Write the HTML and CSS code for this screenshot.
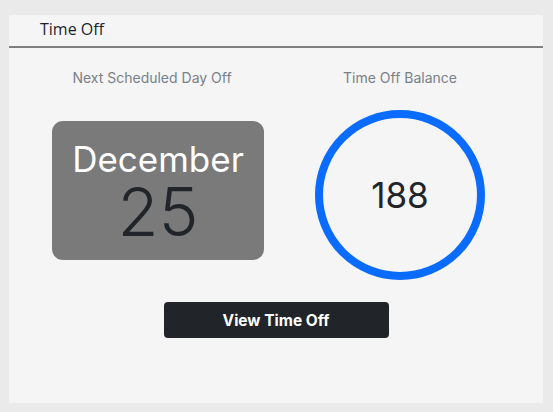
FILE: index.html
```html
<!DOCTYPE html>
<html>
<head>
<meta charset="utf-8">
<link rel="stylesheet" href="styles.css">
</head>
<body>
<div class="card">
  <div class="card-header">Time Off</div>
  <div class="card-body">
    <div class="cols">
      <div class="col">
        <div class="label">Next Scheduled Day Off</div>
        <div class="date-box">
          <div class="month">December</div>
          <div class="day">25</div>
        </div>
      </div>
      <div class="col">
        <div class="label">Time Off Balance</div>
        <div class="ring"><span>188</span></div>
      </div>
    </div>
    <div class="actions">
      <button class="btn">View Time Off</button>
    </div>
  </div>
</div>
</body>
</html>
```
FILE: styles.css
```css
html, body {
  margin: 0;
  padding: 0;
  background: #eaeaea;
}
body {
  padding: 15px 10px 9px 9px;
  font-family: "Inter", "Noto Sans", sans-serif;
}
.card {
  background: #f5f5f5;
  height: 388px;
  box-sizing: border-box;
}
.card-header {
  height: 33px;
  box-sizing: border-box;
  border-bottom: 2px solid #7f7f7f;
  padding: 2px 0 0 31px;
  font-family: "Open Sans", sans-serif;
  font-size: 16px;
  color: #1c1f2e;
  line-height: 24px;
}
.card-body {
  padding: 0 19px;
}
.cols {
  display: flex;
}
.col {
  flex: 1;
  display: flex;
  flex-direction: column;
  align-items: center;
}
.label {
  margin-top: 21px;
  font-size: 14px;
  color: #7a808a;
  line-height: 18px;
}
.date-box {
  margin-top: 34px;
  margin-left: 12px;
  width: 212px;
  height: 139px;
  background: #7a7a7a;
  border-radius: 11px;
  display: flex;
  flex-direction: column;
  align-items: center;
}
.month {
  margin-top: 18px;
  font-size: 35px;
  color: #ffffff;
  line-height: 40px;
}
.day {
  font-size: 67px;
  color: #212529;
  line-height: 66px;
  font-weight: 300;
}
.ring {
  margin-top: 23px;
  width: 170px;
  height: 170px;
  box-sizing: border-box;
  border: 8px solid #0a6cff;
  border-radius: 50%;
  display: flex;
  align-items: center;
  justify-content: center;
  font-size: 35px;
  color: #212529;
}
.actions {
  display: flex;
  justify-content: center;
  margin-top: 22px;
}
.btn {
  width: 225px;
  height: 36px;
  background: #212429;
  color: #fff;
  border: none;
  border-radius: 4px;
  font-family: "Inter", sans-serif;
  font-weight: 700;
  font-size: 15.5px;
}
```
